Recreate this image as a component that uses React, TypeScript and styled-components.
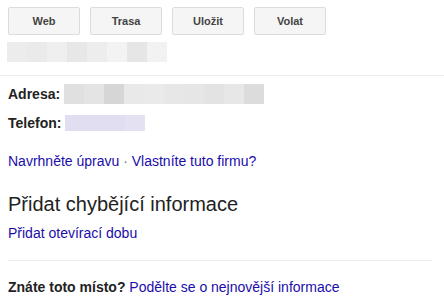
import React from "react";
import styled, { createGlobalStyle } from "styled-components";

const Global = createGlobalStyle`
  html, body { margin: 0; padding: 0; background: #fff; }
  body { font-family: "Liberation Sans", Arial, sans-serif; color: #222; }
`;

const Page = styled.div`
  width: 444px;
  height: 308px;
  overflow: hidden;
`;

const Top = styled.div`
  padding: 7px 8px 13px;
  border-bottom: 1px solid #ebebeb;
`;

const ButtonRow = styled.div`
  display: flex;
  gap: 10px;
`;

const ActionButton = styled.div`
  width: 72px;
  height: 28px;
  box-sizing: border-box;
  display: flex;
  align-items: center;
  justify-content: center;
  background: #f5f5f5;
  border: 1px solid #dcdcdc;
  border-radius: 2px;
  font-size: 11px;
  font-weight: bold;
  color: #444;
`;

const BlurRow = styled.div<{ $mt?: number; $ml?: number; $h: number }>`
  display: flex;
  margin-top: ${(p) => p.$mt ?? 0}px;
  margin-left: ${(p) => p.$ml ?? 0}px;
  height: ${(p) => p.$h}px;
`;

const BlurCell = styled.div<{ $c: string; $w?: number }>`
  width: ${(p) => p.$w ?? 20}px;
  height: 100%;
  background: ${(p) => p.$c};
`;

const Details = styled.div`
  padding: 8px 8px 0;
`;

const InfoRow = styled.div<{ $mt?: number }>`
  display: flex;
  align-items: center;
  height: 20px;
  margin-top: ${(p) => p.$mt ?? 0}px;
`;

const Label = styled.span`
  font-size: 14px;
  font-weight: bold;
  color: #222;
  margin-right: 4px;
`;

const LinkLine = styled.div<{ $mt: number }>`
  margin-top: ${(p) => p.$mt}px;
  font-size: 14px;
  line-height: 17px;
  color: #1a0dab;
`;

const Link = styled.span`
  color: #1a0dab;
`;

const Sep = styled.span`
  color: #70757a;
`;

const Heading = styled.div`
  margin-top: 22px;
  font-size: 20px;
  line-height: 24px;
  color: #222;
`;

const Divider = styled.div`
  margin: 18px 12px 0 8px;
  border-top: 1px solid #ebebeb;
`;

const Footer = styled.div`
  padding: 18px 8px 0;
  font-size: 14px;
  line-height: 17px;
`;

const Strong = styled.span`
  font-weight: bold;
  color: #222;
`;

const topBlur = ["#ececec", "#eaeaea", "#efefef", "#e7e7e7", "#ededed", "#f3f3f3", "#e6e6e6", "#f2f2f2"];
const addrBlur = ["#e0e0e0", "#e4e4e4", "#d7d6d7", "#e9e9e9", "#eaeaea", "#e7e7e7", "#e5e6e5", "#e3e3e3", "#e7e7e7", "#dcdcdc"];

export default function App() {
  return (
    <Page>
      <Global />
      <Top>
        <ButtonRow>
          {["Web", "Trasa", "Uložit", "Volat"].map((t) => (
            <ActionButton key={t}>{t}</ActionButton>
          ))}
        </ButtonRow>
        <BlurRow $mt={7} $ml={-1} $h={20}>
          {topBlur.map((c, i) => (
            <BlurCell key={i} $c={c} />
          ))}
        </BlurRow>
      </Top>
      <Details>
        <InfoRow>
          <Label>Adresa:</Label>
          <BlurRow $h={20}>
            {addrBlur.map((c, i) => (
              <BlurCell key={i} $c={c} />
            ))}
          </BlurRow>
        </InfoRow>
        <InfoRow $mt={9}>
          <Label>Telefon:</Label>
          <BlurRow $h={16}>
            <BlurCell $c="#e1def2" $w={60} />
            <BlurCell $c="#e4e1f3" $w={20} />
          </BlurRow>
        </InfoRow>
        <LinkLine $mt={20}>
          <Link>Navrhněte úpravu</Link> <Sep>·</Sep> <Link>Vlastníte tuto firmu?</Link>
        </LinkLine>
        <Heading>Přidat chybějící informace</Heading>
        <LinkLine $mt={9}>
          <Link>Přidat otevírací dobu</Link>
        </LinkLine>
      </Details>
      <Divider />
      <Footer>
        <Strong>Znáte toto místo?</Strong> <Link>Podělte se o nejnovější informace</Link>
      </Footer>
    </Page>
  );
}
